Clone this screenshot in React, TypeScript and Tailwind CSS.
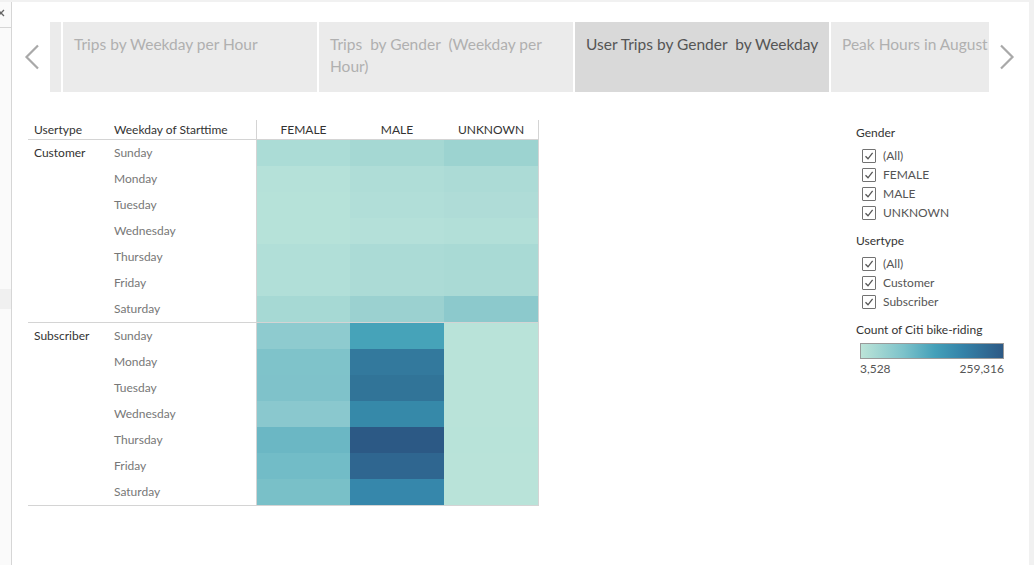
import React from 'react'

const days = ['Sunday', 'Monday', 'Tuesday', 'Wednesday', 'Thursday', 'Friday', 'Saturday']

// colours per row: [FEMALE, MALE, UNKNOWN]
const customer = [
  ['#abdcd6', '#a5d8d3', '#9cd3d0'],
  ['#b5e1d9', '#afddd7', '#acdbd6'],
  ['#b6e2d9', '#b1ded8', '#afdcd7'],
  ['#b6e2d9', '#b4e0d9', '#b2dfd8'],
  ['#b1dfd8', '#abdbd6', '#a9dad5'],
  ['#b1dfd8', '#acdbd6', '#aadad5'],
  ['#a6d9d4', '#9bd1d0', '#8cc9cc'],
]

const subscriber = [
  ['#8ecbcf', '#46a3b9', '#b9e3d9'],
  ['#7fc3ca', '#33799d', '#b9e3d9'],
  ['#7fc2ca', '#317498', '#b9e3d9'],
  ['#8ac8ce', '#3689a9', '#b9e3d9'],
  ['#6bb7c4', '#2c5985', '#b8e3d9'],
  ['#72bcc7', '#2f6690', '#b9e3d9'],
  ['#79c0c8', '#3687ab', '#b9e3d9'],
]

function Chevron({ dir }: { dir: 'left' | 'right' }) {
  return (
    <svg width="16" height="26" viewBox="0 0 16 26" fill="none">
      <path
        d={dir === 'left' ? 'M14 1.5 L2.5 13 L14 24.5' : 'M2 1.5 L13.5 13 L2 24.5'}
        stroke="#a9a9a9"
        strokeWidth="2.2"
      />
    </svg>
  )
}

function Tab({ label, active, width }: { label: string; active?: boolean; width: string }) {
  return (
    <div
      className={`${width} h-full shrink-0 overflow-hidden pl-[11px] pt-[11px] text-[15.5px] leading-[22px] ${
        active ? 'whitespace-pre bg-[#d9d9d9] text-[#555555]' : 'whitespace-pre-wrap bg-[#ebebeb] pr-[11px] text-[#b0b0b0]'
      }`}
    >
      {label}
    </div>
  )
}

function Group({ name, rows }: { name: string; rows: string[][] }) {
  return (
    <div className="flex border-b border-[#d4d4d4]">
      <div className="w-[80px] pl-[6px] text-[12px] leading-[26px] text-[#333333]">{name}</div>
      <div className="w-[148px]">
        {days.map((d) => (
          <div key={d} className="h-[26px] pl-[6px] text-[12px] leading-[26px] text-[#777777]">
            {d}
          </div>
        ))}
      </div>
      <div className="w-[283px] border-x border-[#d4d4d4]">
        {rows.map((r, i) => (
          <div key={i} className="flex h-[26px]">
            <div className="w-[93px]" style={{ backgroundColor: r[0] }} />
            <div className="w-[94px]" style={{ backgroundColor: r[1] }} />
            <div className="flex-1" style={{ backgroundColor: r[2] }} />
          </div>
        ))}
      </div>
    </div>
  )
}

function Check({ label }: { label: string }) {
  return (
    <div className="flex h-[19px] items-center pl-[6px]">
      <div className="flex h-[14px] w-[14px] items-center justify-center rounded-[1px] border border-[#727272] bg-white">
        <svg width="10" height="10" viewBox="0 0 10 10" fill="none">
          <path d="M1.5 5.2 L4 7.8 L8.6 1.8" stroke="#555555" strokeWidth="1.3" />
        </svg>
      </div>
      <span className="ml-[7px] text-[12px] leading-[14px] text-[#555555]">{label}</span>
    </div>
  )
}

export default function App() {
  return (
    <div className="flex h-[565px] w-[1034px] flex-col overflow-hidden bg-white font-['Lato',sans-serif]">
      <div className="h-[2px] shrink-0 bg-[#f1f1f1]" />
      <div className="flex flex-1">
        {/* collapsed side panel */}
        <div className="w-[12px] shrink-0 border-r border-[#d6d6d6] bg-[#fafafa]">
          <div className="h-[26px] border-b border-[#d6d6d6] pt-[7px]">
            <svg width="6" height="12" viewBox="0 0 6 12" fill="none">
              <path d="M-2 1 L4 7 M4 1 L-2 7" stroke="#666666" strokeWidth="1.3" />
            </svg>
          </div>
          <div className="mt-[261px] h-[20px] bg-[#f0f0f0]" />
        </div>

        <div className="flex-1">
          {/* story tabs */}
          <div className="mt-[20px] flex h-[70px]">
            <div className="flex w-[38px] items-center justify-center pl-[2px]">
              <Chevron dir="left" />
            </div>
            <div className="flex gap-[2px]">
              <div className="w-[11px] bg-[#ebebeb]" />
              <Tab label="Trips by Weekday per Hour" width="w-[254px]" />
              <Tab label="Trips  by Gender  (Weekday per Hour)" width="w-[254px]" />
              <Tab label="User Trips by Gender  by Weekday" width="w-[254px]" active />
              <div className="h-full w-[158px] shrink-0 overflow-hidden whitespace-nowrap bg-[#ebebeb] pl-[11px] pt-[11px] text-[15.5px] leading-[22px] text-[#b0b0b0]">
                Peak Hours in August
              </div>
            </div>
            <div className="flex items-center pl-[10px]">
              <Chevron dir="right" />
            </div>
          </div>

          <div className="mt-[28px] flex pl-[16px]">
            {/* heatmap */}
            <div className="w-[511px]">
              <div className="flex h-[20px] border-b border-[#d4d4d4] text-[12px] leading-[20px] text-[#333333]">
                <div className="w-[80px] pl-[6px]">Usertype</div>
                <div className="w-[148px] pl-[6px]">Weekday of Starttime</div>
                <div className="flex w-[283px] border-x border-[#d4d4d4]">
                  <div className="w-[93px] text-center">FEMALE</div>
                  <div className="w-[94px] text-center">MALE</div>
                  <div className="flex-1 text-center">UNKNOWN</div>
                </div>
              </div>
              <Group name="Customer" rows={customer} />
              <Group name="Subscriber" rows={subscriber} />
            </div>

            {/* legends */}
            <div className="ml-[317px] w-[150px] pt-[5px]">
              <div className="text-[12px] leading-[16px] text-[#333333]">Gender</div>
              <div className="mt-[5px]">
                <Check label="(All)" />
                <Check label="FEMALE" />
                <Check label="MALE" />
                <Check label="UNKNOWN" />
              </div>
              <div className="mt-[11px] text-[12px] leading-[16px] text-[#333333]">Usertype</div>
              <div className="mt-[5px]">
                <Check label="(All)" />
                <Check label="Customer" />
                <Check label="Subscriber" />
              </div>
              <div className="mt-[11px] text-[12px] leading-[16px] text-[#333333]">Count of Citi bike-riding</div>
              <div className="ml-[4px] mt-[5px] h-[16px] w-[144px] border border-[#9a9a9a] bg-[linear-gradient(to_right,#bce4d8,#7cc2ca_30%,#44a0b9_52%,#3482a8_72%,#2c5985)]" />
              <div className="ml-[4px] mt-[3px] flex w-[144px] justify-between text-[12px] leading-[14px] text-[#555555]">
                <span>3,528</span>
                <span>259,316</span>
              </div>
            </div>
          </div>
        </div>

        <div className="w-[5px] shrink-0 bg-[#f1f1f1]" />
      </div>
    </div>
  )
}
